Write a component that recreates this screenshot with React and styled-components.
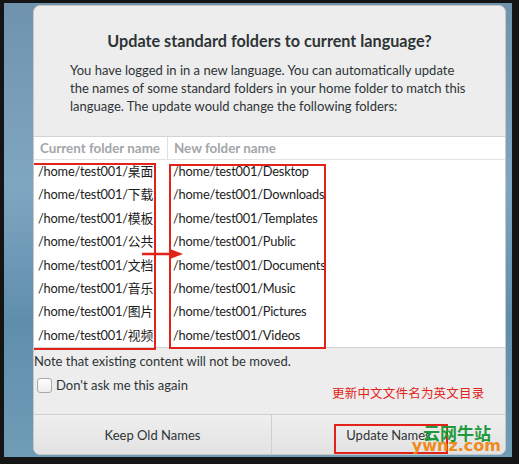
import React from "react";
import styled, { createGlobalStyle } from "styled-components";

const GlobalStyle = createGlobalStyle`
  html, body {
    margin: 0;
    padding: 0;
    background: #151515;
  }
  * {
    box-sizing: border-box;
  }
`;

const folders = [
  ["/home/test001/桌面", "/home/test001/Desktop"],
  ["/home/test001/下载", "/home/test001/Downloads"],
  ["/home/test001/模板", "/home/test001/Templates"],
  ["/home/test001/公共", "/home/test001/Public"],
  ["/home/test001/文档", "/home/test001/Documents"],
  ["/home/test001/音乐", "/home/test001/Music"],
  ["/home/test001/图片", "/home/test001/Pictures"],
  ["/home/test001/视频", "/home/test001/Videos"],
];

const App = () => {
  return (
    <>
      <GlobalStyle />
      <Screen>
        <Desktop>
          <Dialog>
            <Title>Update standard folders to current language?</Title>
            <Message>
              You have logged in in a new language. You can automatically update
              the names of some standard folders in your home folder to match this
              language. The update would change the following folders:
            </Message>
            <Table>
              <HeadRow>
                <HeadCell $first>Current folder name</HeadCell>
                <HeadCell>New folder name</HeadCell>
              </HeadRow>
              {folders.map(([oldName, newName]) => (
                <Row key={oldName}>
                  <Cell $first>{oldName}</Cell>
                  <Cell>{newName}</Cell>
                </Row>
              ))}
            </Table>
            <Note>Note that existing content will not be moved.</Note>
            <CheckRow>
              <CheckBox />
              <span>Don't ask me this again</span>
            </CheckRow>
            <ButtonBar>
              <Button>Keep Old Names</Button>
              <Button>Update Names</Button>
            </ButtonBar>

            <MarkBox $left={-2} $top={157} $width={124} $height={187} />
            <MarkBox $left={135} $top={158} $width={157} $height={185} />
            <Arrow width="42" height="12" viewBox="0 0 42 12">
              <line x1="0" y1="6" x2="30" y2="6" stroke="#e2231a" strokeWidth="2.5" />
              <polygon points="28,1 41,6 28,11" fill="#e2231a" />
            </Arrow>
            <MarkBox $left={300} $top={418} $width={114} $height={30} />
            <Annotation>更新中文文件名为英文目录</Annotation>
            <Watermark>
              <WaterCn>云网牛站</WaterCn>
              <WaterEn>ywnz.com</WaterEn>
            </Watermark>
          </Dialog>
        </Desktop>
      </Screen>
    </>
  );
};

const Screen = styled.div`
  width: 519px;
  height: 464px;
  padding: 3px 7px 7px 4px;
  background: #151515;
`;

const Desktop = styled.div`
  height: 100%;
  padding: 2px 6px 2px 29px;
  background: linear-gradient(180deg, #6f93ad 0%, #7fa6c1 40%, #5f8ead 70%, #6f9cb6 100%);
`;

const Dialog = styled.div`
  position: relative;
  height: 100%;
  display: flex;
  flex-direction: column;
  background: #ededed;
  border-radius: 7px;
  border: 1px solid #c8c8c8;
  font-family: "Lato", "Noto Sans CJK SC", sans-serif;
  color: #2e3436;
  overflow: hidden;
`;

const Title = styled.h1`
  margin: 25px 0 0;
  text-align: center;
  font-size: 16.2px;
  font-weight: 700;
  line-height: 20px;
  color: #2e3436;
`;

const Message = styled.p`
  margin: 10px 32px 0 36px;
  font-size: 13px;
  line-height: 18px;
  color: #2e3436;
`;

const Table = styled.div`
  margin-top: 21px;
  background: #fff;
  border-top: 1px solid #d4d4d4;
  border-bottom: 1px solid #d4d4d4;
`;

const HeadRow = styled.div`
  display: grid;
  grid-template-columns: 134px 1fr;
  height: 23px;
  border-bottom: 1px solid #e4e4e4;
`;

const HeadCell = styled.div`
  padding-left: 6px;
  border-right: ${(p) => (p.$first ? "1px solid #e0e0e0" : "none")};
  font-size: 13.4px;
  font-weight: 700;
  line-height: 22px;
  color: #a2a6a8;
`;

const Row = styled.div`
  display: grid;
  grid-template-columns: 134px 1fr;
  height: 23.4px;
`;

const Cell = styled.div`
  padding-left: ${(p) => (p.$first ? "4px" : "5px")};
  font-size: 12.8px;
  letter-spacing: -0.2px;
  line-height: 23px;
  color: #1c1c1c;
  white-space: nowrap;
`;

const Note = styled.div`
  margin-top: 4px;
  font-size: 13px;
  line-height: 18px;
`;

const CheckRow = styled.label`
  display: flex;
  align-items: center;
  gap: 4px;
  margin: 6px 0 0 3px;
  font-size: 13px;
  line-height: 18px;
`;

const CheckBox = styled.span`
  width: 15px;
  height: 15px;
  border: 1px solid #a8a8a8;
  border-radius: 3px;
  background: linear-gradient(#ffffff, #ececec);
`;

const ButtonBar = styled.div`
  margin-top: auto;
  display: grid;
  grid-template-columns: 237px 1fr;
  height: 40px;
  border-top: 1px solid #cfcfcf;
`;

const Button = styled.button`
  border: none;
  border-left: 1px solid #cfcfcf;
  &:first-child {
    border-left: none;
  }
  background: linear-gradient(#efefef, #e2e2e2);
  font-family: "Lato", sans-serif;
  font-size: 13px;
  color: #2e3436;
  padding: 0;
`;

const MarkBox = styled.div`
  position: absolute;
  left: ${(p) => p.$left}px;
  top: ${(p) => p.$top}px;
  width: ${(p) => p.$width}px;
  height: ${(p) => p.$height}px;
  border: 2px solid #e2231a;
  pointer-events: none;
`;

const Arrow = styled.svg`
  position: absolute;
  left: 108px;
  top: 242px;
`;

const Annotation = styled.div`
  position: absolute;
  left: 298px;
  top: 377px;
  font-family: "Noto Sans CJK SC", sans-serif;
  font-size: 12.5px;
  color: #e2231a;
  letter-spacing: 0.2px;
`;

const Watermark = styled.div`
  position: absolute;
  right: 4px;
  bottom: 0px;
  display: flex;
  flex-direction: column;
  align-items: flex-end;
  line-height: 1;
`;

const WaterCn = styled.span`
  font-family: "Noto Sans CJK SC", sans-serif;
  font-weight: 700;
  font-size: 17px;
  color: #1e9a3c;
  margin-right: 10px;
`;

const WaterEn = styled.span`
  font-family: "DejaVu Sans", sans-serif;
  font-weight: 700;
  font-size: 16px;
  color: #ef8a1d;
  margin-top: -3px;
`;

export default App;
